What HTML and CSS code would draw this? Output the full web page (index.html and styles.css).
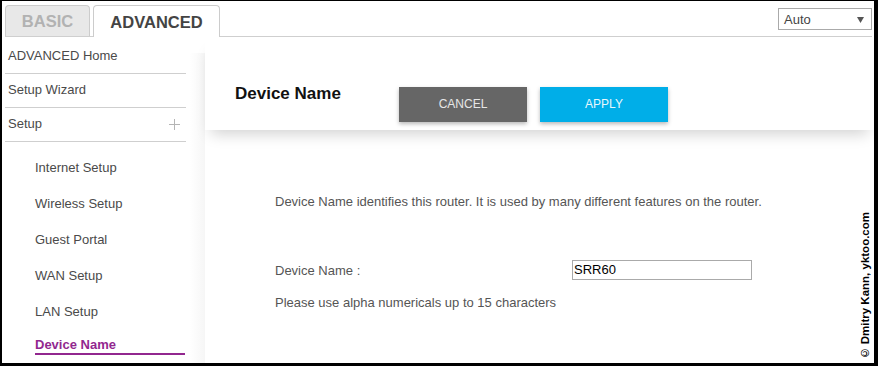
FILE: index.html
```html
<!DOCTYPE html>
<html>
<head>
<meta charset="utf-8">
<link rel="stylesheet" href="styles.css">
</head>
<body>
<div class="frame">
  <div class="topbar">
    <div class="tab tab-basic">BASIC</div>
    <div class="tab tab-adv">ADVANCED</div>
    <div class="select">
      <span>Auto</span>
      <svg class="caret" width="7" height="6" viewBox="0 0 7 6"><path d="M0 0H7L3.5 6Z" fill="#555"/></svg>
    </div>
  </div>
  <div class="content">
    <div class="sidebar">
      <div class="nav-item first">ADVANCED Home</div>
      <div class="nav-item">Setup Wizard</div>
      <div class="nav-item setup">Setup
        <svg class="plus" width="11" height="11" viewBox="0 0 11 11"><path d="M5.5 0V11M0 5.5H11" stroke="#b5b5b5" stroke-width="1"/></svg>
      </div>
      <div class="sub">
        <div class="sub-item">Internet Setup</div>
        <div class="sub-item">Wireless Setup</div>
        <div class="sub-item">Guest Portal</div>
        <div class="sub-item">WAN Setup</div>
        <div class="sub-item">LAN Setup</div>
        <div class="sub-item active">Device Name</div>
      </div>
    </div>
    <div class="gutter"></div>
    <div class="main">
      <div class="header">
        <div class="title">Device Name</div>
        <div class="btn btn-cancel">CANCEL</div>
        <div class="btn btn-apply">APPLY</div>
      </div>
      <div class="body">
        <p class="desc">Device Name identifies this router. It is used by many different features on the router.</p>
        <div class="form-row">
          <span class="label">Device Name :</span>
          <div class="input">SRR60</div>
        </div>
        <p class="hint">Please use alpha numericals up to 15 characters</p>
      </div>
    </div>
  </div>
  <div class="watermark">© Dmitry Kann, yktoo.com</div>
</div>
</body>
</html>
```

FILE: styles.css
```css
* { box-sizing: border-box; }
html, body { margin: 0; padding: 0; background: #000; }
body { font-family: "Liberation Sans", Arial, sans-serif; }

.frame {
  position: relative;
  width: 878px;
  height: 366px;
  border-style: solid;
  border-color: #000;
  border-width: 1px 4px 3px 2px;
  background: #fff;
  overflow: hidden;
  display: flex;
  flex-direction: column;
}

.topbar {
  display: flex;
  align-items: flex-end;
  height: 36px;
  margin: 0 2px 0 3px;
  border-bottom: 1px solid #cfcfcf;
  flex: none;
}

.tab {
  font-weight: bold;
  font-size: 16.5px;
  text-align: center;
  border: 1px solid #cccccc;
  border-bottom: none;
  border-radius: 4px 4px 0 0;
}
.tab-basic {
  width: 85px;
  height: 31px;
  line-height: 31px;
  background: #e8e8e8;
  color: #b2b2b2;
}
.tab-adv {
  width: 127px;
  height: 32px;
  line-height: 32px;
  margin-left: 3px;
  margin-bottom: -1px;
  background: #fff;
  color: #444;
  position: relative;
}

.select {
  margin-left: auto;
  align-self: flex-start;
  margin-top: 7px;
  width: 94px;
  height: 22px;
  border: 1px solid #aaaaaa;
  display: flex;
  align-items: center;
  justify-content: space-between;
  padding: 0 7px 0 5px;
  font-size: 13px;
  color: #444;
}
.caret { display: block; margin-top: 1px; }

.content {
  flex: 1;
  display: flex;
  min-height: 0;
}

.sidebar {
  width: 181px;
  margin-left: 3px;
  flex: none;
  font-size: 13px;
  color: #4a4a4a;
}
.nav-item {
  height: 34px;
  line-height: 32px;
  padding-left: 3px;
  padding-bottom: 1px;
  border-bottom: 1px solid #cfcfcf;
  display: flex;
  align-items: center;
  justify-content: space-between;
}
.nav-item.first { height: 37px; padding-top: 2px; }
.plus { margin-right: 6px; }

.sub { padding-top: 8px; padding-left: 30px; }
.sub-item { height: 36px; line-height: 36px; }
.sub-item.active {
  height: auto;
  line-height: 16px;
  margin-top: 7px;
  width: 150px;
  color: #92278f;
  font-weight: bold;
  border-bottom: 2px solid #92278f;
}

.gutter {
  width: 19px;
  flex: none;
  margin-top: 16px;
  background: linear-gradient(to right, #ffffff 20%, #f6f6f6 100%);
}

.main {
  flex: 1;
  min-width: 0;
}

.header {
  height: 93px;
  display: flex;
  align-items: flex-start;
  padding: 48px 0 0 30px;
  background: #fff;
  box-shadow: 0 10px 14px -6px rgba(0, 0, 0, 0.18);
  position: relative;
}
.title {
  font-size: 17px;
  font-weight: bold;
  color: #111;
  line-height: 18px;
  width: 164px;
}
.btn {
  width: 128px;
  height: 35px;
  margin-top: 2px;
  line-height: 35px;
  text-align: center;
  font-size: 12px;
  box-shadow: 0 2px 4px rgba(0, 0, 0, 0.28);
}
.btn-cancel { background: #666666; color: #e6e6e6; }
.btn-apply { background: #00aee8; color: #e9f7fd; margin-left: 13px; }

.body {
  padding-left: 70px;
  font-size: 13px;
  color: #555;
}
.desc { margin: 64px 0 0; line-height: 16px; }
.form-row {
  display: flex;
  align-items: center;
  margin-top: 50px;
  height: 20px;
}
.label { width: 297px; }
.input {
  width: 180px;
  height: 20px;
  border: 1px solid #aaaaaa;
  color: #000;
  font-size: 13px;
  line-height: 18px;
  padding-left: 1px;
}
.hint { margin: 15px 0 0; line-height: 16px; }

.watermark {
  position: absolute;
  right: 1px;
  bottom: 4px;
  width: 15px;
  background: #fff;
  writing-mode: vertical-rl;
  transform: rotate(180deg);
  font-size: 11.5px;
  font-weight: bold;
  color: #000;
  line-height: 15px;
  white-space: nowrap;
}
```
